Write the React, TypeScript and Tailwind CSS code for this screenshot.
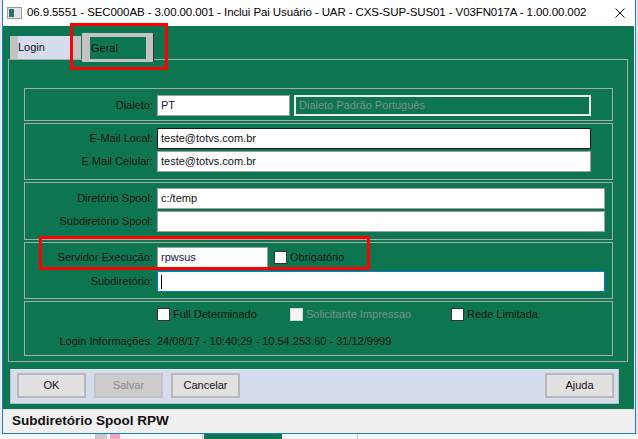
import React from "react";

const ui = { fontFamily: '"Liberation Sans", Arial, sans-serif' };

function Input({ value, w, border = "border-[#a0a0a0]", color = "text-[#111]", cursor = false }: { value?: string; w: string; border?: string; color?: string; cursor?: boolean }) {
    return (
        <div className={`${w} h-[21px] bg-white border ${border} flex items-center pl-[3px] text-[11px] ${color}`}>
            {value}
            {cursor && <span className="w-[1px] h-[14px] bg-black" />}
        </div>
    );
}

function Label({ text }: { text: string }) {
    return <div className="w-[129px] shrink-0 text-right text-[11px] text-[#141414] pr-[1px]">{text}</div>;
}

function Row({ label, children, className = "" }: { label: string; children: React.ReactNode; className?: string }) {
    return (
        <div className={`flex items-center ${className}`}>
            <Label text={label} />
            <div className="ml-[3px] flex items-center">{children}</div>
        </div>
    );
}

function Check({ label, disabled = false }: { label: string; disabled?: boolean }) {
    return (
        <div className="flex items-center">
            <span className={`w-[13px] h-[13px] border ${disabled ? "border-[#cfd6d2] bg-[#f4f4f4]" : "border-[#333] bg-white"}`} />
            <span className={`ml-[3px] text-[11px] ${disabled ? "text-[#7d9287]" : "text-[#141414]"}`}>{label}</span>
        </div>
    );
}

function Group({ h, pt, children }: { h: string; pt: string; children: React.ReactNode }) {
    return <div className={`${h} ${pt} border border-[#a3aea8] flex flex-col`}>{children}</div>;
}

function Btn({ text, disabled = false, className = "" }: { text: string; disabled?: boolean; className?: string }) {
    return (
        <div
            className={`w-[69px] h-[25px] border-2 flex items-center justify-center text-[11px] ${disabled ? "bg-[#cccccc] border-[#c4c4c4] text-[#8a8a8a]" : "bg-[#e1e1e1] border-[#b8b8b8] text-[#111]"} ${className}`}
        >
            {text}
        </div>
    );
}

export default function App() {
    return (
        <div className="relative w-[638px] h-[439px] overflow-hidden flex flex-col bg-[#f3f3f3]" style={ui}>
            <div className="flex h-[434px]">
                <div className="w-[2px] bg-[#ececec]" />
                <div className="w-[634px] flex flex-col bg-white border-x border-b border-[#1b7fd1]">
                    {/* title bar */}
                    <div className="h-[26px] flex items-center bg-white pl-[4px]">
                        <svg width="15" height="12" viewBox="0 0 15 12">
                            <rect x="0.5" y="0.5" width="14" height="11" fill="#e6e6e6" stroke="#9a9a9a" />
                            <rect x="2" y="2" width="5" height="8" fill="#2f6f64" />
                            <rect x="8" y="2" width="5" height="8" fill="#dbe6ef" />
                        </svg>
                        <span className="ml-[5px] text-[11.5px] text-black tracking-[-0.1px]">
                            06.9.5551 - SEC000AB - 3.00.00.001 - Inclui Pai Usuário - UAR - CXS-SUP-SUS01 - V03FN017A - 1.00.00.002
                        </span>
                        <svg className="ml-auto mr-[10px]" width="10" height="10" viewBox="0 0 10 10">
                            <path d="M0.5 0.5 L9.5 9.5 M9.5 0.5 L0.5 9.5" stroke="#111" strokeWidth="1" />
                        </svg>
                    </div>

                    {/* green body */}
                    <div className="h-[383px] w-[631px] bg-[#0d7650] flex flex-col">
                        <div className="h-[26px] mt-[7px] flex items-start pl-[7px]">
                            <div className="mt-[3px] h-[23px] w-[71px] bg-[#d5dcee] border-l-[8px] border-r-[9px] border-[#c3c3c3] flex items-center text-[11px] text-[#111]">
                                Login
                            </div>
                            <div className="relative z-10 ml-[1px] h-[29px] w-[71px] border-t-[4px] border-b-[3px] border-l-[8px] border-r-[7px] border-[#c3c3c3] bg-[#0d7650] flex items-center text-[11px] text-[#111] pl-[1px] shadow-[1px_0_0_#333]">
                                Geral
                            </div>
                        </div>

                        <div className="ml-[5px] w-[620px] h-[303px] border border-[#a3aea8] pt-[28px] pl-[15px] flex flex-col gap-[2px]">
                            <div className="w-[589px] flex flex-col gap-[2px]">
                                <Group h="h-[33px]" pt="pt-[6px]">
                                    <Row label="Dialeto:">
                                        <Input value="PT" w="w-[133px]" color="text-[#101048]" />
                                        <div className="ml-[4px] w-[297px] h-[21px] border-2 border-[#e9ecea] flex items-center pl-[3px] text-[11px] text-[#7f9188]">
                                            Dialeto Padrão Português
                                        </div>
                                    </Row>
                                </Group>
                                <Group h="h-[57px]" pt="pt-[4px]">
                                    <Row label="E-Mail Local:">
                                        <Input value="teste@totvs.com.br" w="w-[434px]" border="border-[#1a1a1a]" />
                                    </Row>
                                    <Row label="E Mail Celular:" className="mt-[2px]">
                                        <Input value="teste@totvs.com.br" w="w-[434px]" />
                                    </Row>
                                </Group>
                                <Group h="h-[58px]" pt="pt-[5px]">
                                    <Row label="Diretório Spool:">
                                        <Input value="c:/temp" w="w-[448px]" />
                                    </Row>
                                    <Row label="Subdiretório Spool:" className="mt-[2px]">
                                        <Input w="w-[448px]" />
                                    </Row>
                                </Group>
                                <Group h="h-[57px]" pt="pt-[4px]">
                                    <Row label="Servidor Execução:">
                                        <Input value="rpwsus" w="w-[111px]" color="text-[#101048]" />
                                        <div className="ml-[6px]">
                                            <Check label="Obrigatório" />
                                        </div>
                                    </Row>
                                    <Row label="Subdiretório:" className="mt-[3px]">
                                        <Input w="w-[448px]" border="border-[#0a78d4]" cursor />
                                    </Row>
                                </Group>
                                <Group h="h-[55px]" pt="pt-[6px]">
                                    <div className="flex items-center h-[13px] pl-[132px]">
                                        <div className="w-[133px]">
                                            <Check label="Full Determinado" />
                                        </div>
                                        <div className="w-[161px]">
                                            <Check label="Solicitante Impressao" disabled />
                                        </div>
                                        <Check label="Rede Limitada" />
                                    </div>
                                    <Row label="Login Informações:" className="mt-[12px]">
                                        <span className="text-[11px] text-[#141414]">24/08/17 - 10:40:29 - 10.54.253.60 - 31/12/9999</span>
                                    </Row>
                                </Group>
                            </div>
                        </div>

                        <div className="ml-[7px] mt-[7px] w-[609px] h-[35px] bg-[#d4dcee] border border-[#b7bfcc] border-t-[#e6ebf5] flex items-start pt-[3px] pl-[6px] pr-[4px] gap-[8px]">
                            <Btn text="OK" />
                            <Btn text="Salvar" disabled />
                            <Btn text="Cancelar" />
                            <Btn text="Ajuda" className="ml-auto" />
                        </div>
                    </div>

                    {/* status bar */}
                    <div className="h-[24px] w-[632px] bg-[#f0f0f0] border-t border-[#e2e2e2] flex items-center pl-[9px] text-[13.5px] font-bold text-[#111]">
                        Subdiretório Spool RPW
                    </div>
                </div>
                <div className="w-[2px] bg-[#dfe6ee]" />
            </div>

            <div className="h-[5px] flex bg-[#f7f7f7]">
                <div className="w-[95px]" />
                <div className="w-[12px] bg-[#c9c9c9]" />
                <div className="w-[10px] ml-[3px] bg-[#eeaabb]" />
                <div className="w-[83px] border-r border-[#c8c8c8]" />
                <div className="w-[78px] ml-[1px] bg-[#0d7650]" />
                <div className="w-[76px] border-r border-[#c8c8c8]" />
            </div>

            {/* annotations */}
            <div className="absolute left-[70px] top-[23px] w-[98px] h-[47px] border-[3px] border-[#ff0000]" />
            <div className="absolute left-[39px] top-[236px] w-[331px] h-[34px] border-[3px] border-[#ff0000]" />
        </div>
    );
}
